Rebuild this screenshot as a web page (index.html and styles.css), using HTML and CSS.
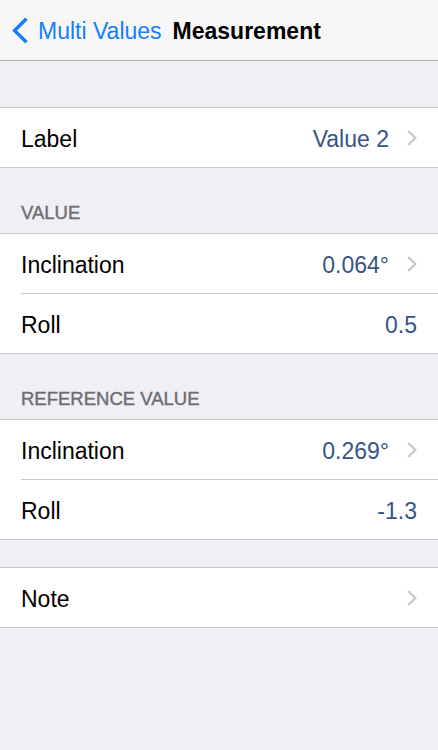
FILE: index.html
```html
<!DOCTYPE html>
<html>
<head>
<meta charset="utf-8">
<link rel="stylesheet" href="styles.css">
</head>
<body>
<header class="nav">
  <div class="back">
    <svg class="back-icon" width="17" height="27" viewBox="0 0 17 27"><polyline points="14.5,1.8 2.6,13.5 14.5,25.2" fill="none" stroke="#157efb" stroke-width="3.4" stroke-linejoin="miter"/></svg>
    <span class="back-text">Multi Values</span>
  </div>
  <div class="title">Measurement</div>
</header>

<div class="gap-top"></div>
<section class="group">
  <div class="row">
    <span class="label">Label</span>
    <span class="value">Value 2</span>
    <svg class="chev" width="10" height="16" viewBox="0 0 10 16"><polyline points="1.2,1 8.4,8 1.2,15" fill="none" stroke="#c7c7cc" stroke-width="2.2"/></svg>
  </div>
</section>

<div class="section-header">VALUE</div>
<section class="group">
  <div class="row">
    <span class="label">Inclination</span>
    <span class="value">0.064°</span>
    <svg class="chev" width="10" height="16" viewBox="0 0 10 16"><polyline points="1.2,1 8.4,8 1.2,15" fill="none" stroke="#c7c7cc" stroke-width="2.2"/></svg>
  </div>
  <div class="sep"></div>
  <div class="row">
    <span class="label">Roll</span>
    <span class="value">0.5</span>
  </div>
</section>

<div class="section-header">REFERENCE VALUE</div>
<section class="group">
  <div class="row">
    <span class="label">Inclination</span>
    <span class="value">0.269°</span>
    <svg class="chev" width="10" height="16" viewBox="0 0 10 16"><polyline points="1.2,1 8.4,8 1.2,15" fill="none" stroke="#c7c7cc" stroke-width="2.2"/></svg>
  </div>
  <div class="sep"></div>
  <div class="row">
    <span class="label">Roll</span>
    <span class="value">-1.3</span>
  </div>
</section>

<div class="gap-mid"></div>
<section class="group">
  <div class="row">
    <span class="label">Note</span>
    <span class="value"></span>
    <svg class="chev" width="10" height="16" viewBox="0 0 10 16"><polyline points="1.2,1 8.4,8 1.2,15" fill="none" stroke="#c7c7cc" stroke-width="2.2"/></svg>
  </div>
</section>
</body>
</html>
```

FILE: styles.css
```css
html, body {
  margin: 0;
  padding: 0;
}
body {
  background: #efeff4;
  font-family: "Liberation Sans", Arial, sans-serif;
  width: 438px;
  min-height: 750px;
}
.nav {
  height: 60px;
  background: #f7f7f8;
  border-bottom: 1px solid #b1b1b4;
  display: flex;
  align-items: center;
  padding-left: 12px;
}
.back {
  display: flex;
  align-items: center;
  color: #157efb;
}
.back-icon {
  display: block;
  margin-right: 9px;
}
.back-text {
  font-size: 23px;
  padding-top: 2px;
}
.title {
  margin-left: 11px;
  font-size: 23px;
  font-weight: bold;
  color: #000;
  padding-top: 2px;
}
.gap-top {
  height: 46px;
}
.gap-mid {
  height: 27px;
}
.group {
  background: #fff;
  border-top: 1px solid #c8c7cc;
  border-bottom: 1px solid #c8c7cc;
}
.row {
  height: 59px;
  display: flex;
  align-items: center;
  padding: 0 21px 0 21px;
  font-size: 23px;
}
.label,
.value {
  padding-top: 4px;
}
.label {
  color: #000;
  flex: 1;
}
.value {
  color: #385487;
}
.chev {
  display: block;
  margin-left: 18px;
}
.sep {
  height: 1px;
  margin-left: 21px;
  background: #c8c7cc;
}
.section-header {
  height: 65px;
  box-sizing: border-box;
  padding: 0 21px 9px;
  display: flex;
  align-items: flex-end;
  font-size: 18.5px;
  color: #6d6d72;
  -webkit-text-stroke: 0.4px #6d6d72;
}
```
